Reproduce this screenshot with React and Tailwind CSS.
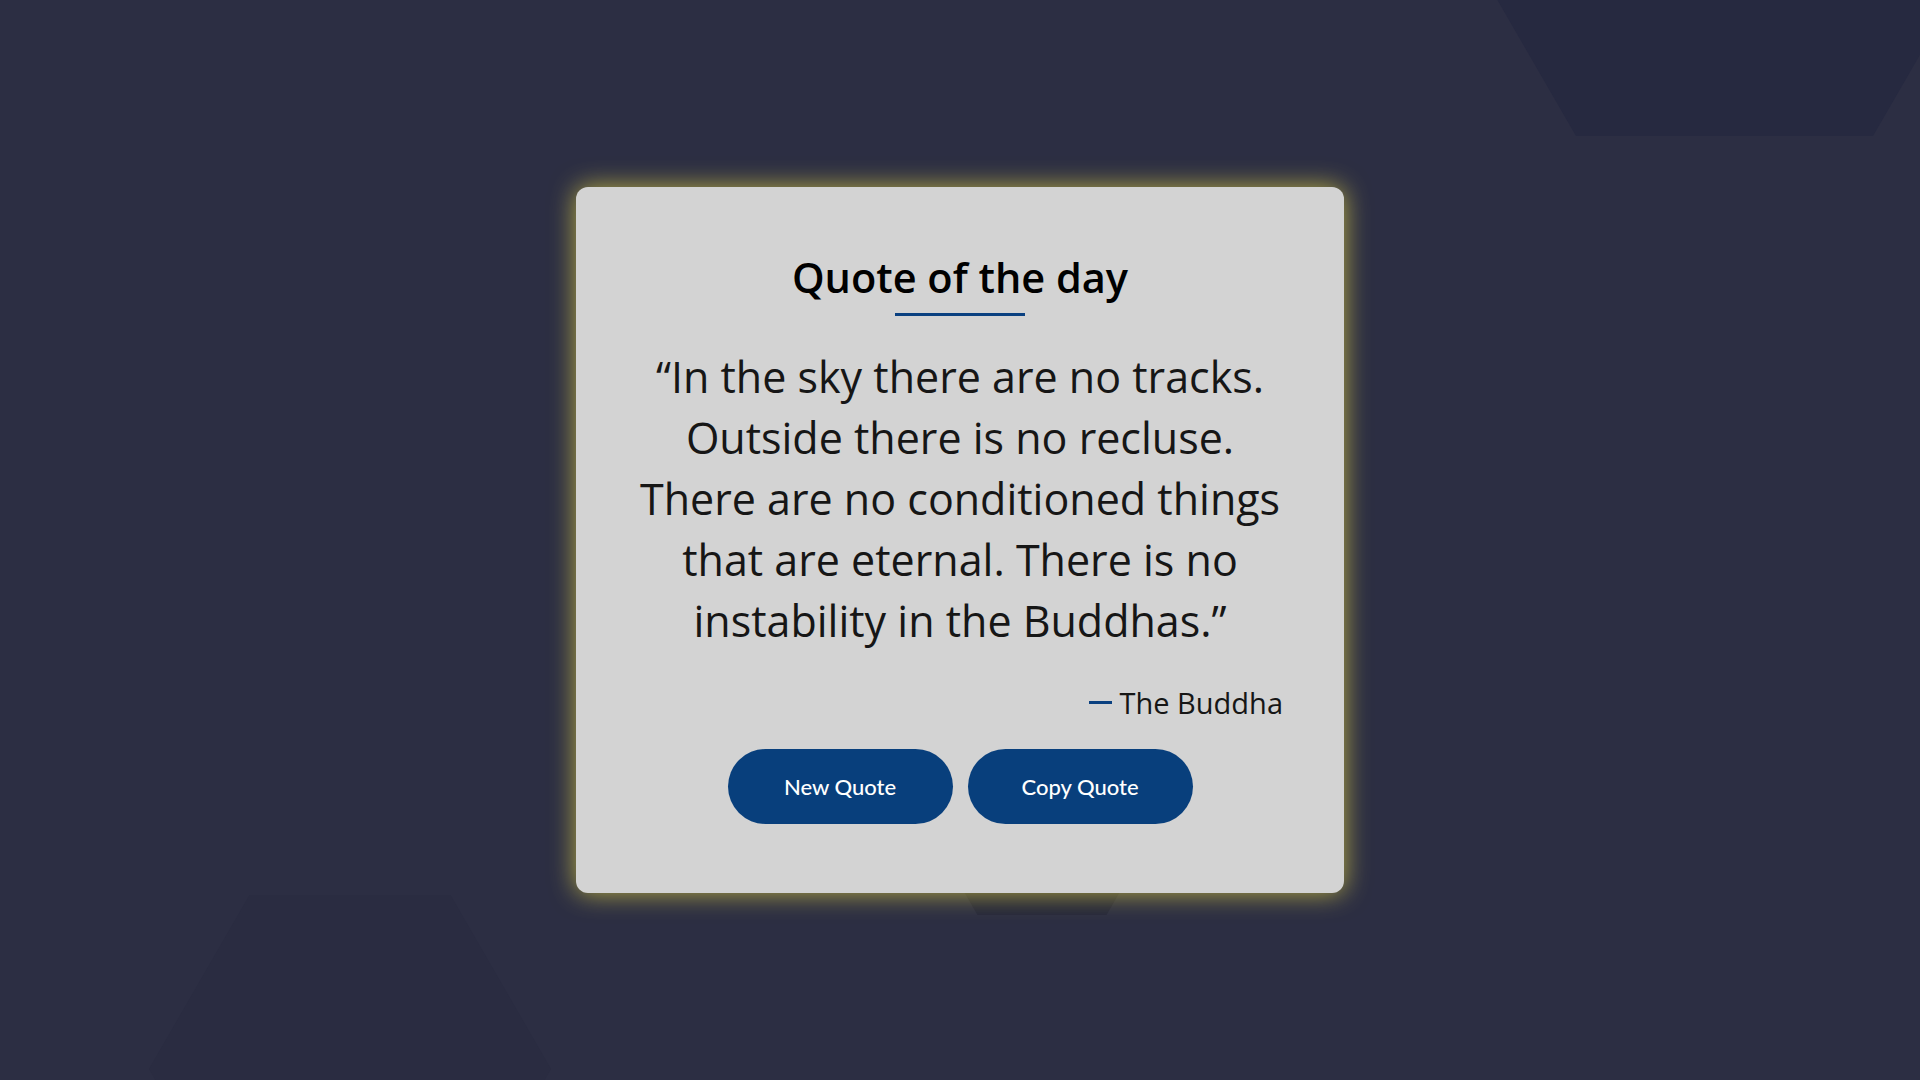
import { useState } from "react";

const quote = {
  lines: [
    "“In the sky there are no tracks.",
    "Outside there is no recluse.",
    "There are no conditioned things",
    "that are eternal. There is no",
    "instability in the Buddhas.”",
  ],
  author: "The Buddha",
};

function Backdrop() {
  return (
    <svg className="absolute inset-0 h-full w-full" viewBox="0 0 1920 1080" preserveAspectRatio="none" aria-hidden="true">
      <polygon points="2021.5,-121 1873,136 1576,136 1427.5,-121 1576,-378 1873,-378" fill="#262940" />
      <polygon points="551,1069 450.5,1243 249.5,1243 149,1069 249.5,895 450.5,895" fill="#2a2c41" />
      <polygon points="1171,803 1106.5,915 977.5,915 913,803 977.5,691 1106.5,691" fill="#25273b" />
    </svg>
  );
}

export default function App() {
  const [copied, setCopied] = useState(false);

  return (
    <main className="relative flex min-h-screen w-full items-center justify-center overflow-hidden bg-[#2c2e43] font-['Open_Sans',sans-serif]">
      <Backdrop />

      <section className="relative w-[768px] rounded-xl bg-[#d3d3d3] px-16 pt-[66px] pb-[69px] shadow-[0_0_26px_rgba(250,235,70,0.68)]">
        <h1 className="text-center text-[41.5px] leading-[48px] font-semibold text-black">Quote of the day</h1>
        <div className="mx-auto mt-[12px] h-[3px] w-[130px] bg-[#0a4080]" />

        <p className="mt-[30px] text-center text-[43px] leading-[61px] font-normal text-[#161616]">
          {quote.lines.map((line) => (
            <span key={line} className="block whitespace-nowrap">
              {line}
            </span>
          ))}
        </p>

        <p className="-mr-[3px] mt-[30px] flex items-center justify-end gap-[8px] text-[29px] leading-[43px] font-normal text-[#161616]">
          <span className="h-[3px] w-[23px] bg-[#0a4080]" />
          {quote.author}
        </p>

        <div className="mt-[25px] flex justify-center gap-[15px] font-['Lato',sans-serif]">
          <button type="button" className="h-[75px] w-[225px] rounded-full bg-[#083f7c] text-[22px] font-medium text-white">
            New Quote
          </button>
          <button
            type="button"
            className="h-[75px] w-[225px] rounded-full bg-[#083f7c] text-[22px] font-medium text-white"
            onClick={() => setCopied(true)}
          >
            {copied ? "Copied!" : "Copy Quote"}
          </button>
        </div>
      </section>
    </main>
  );
}
